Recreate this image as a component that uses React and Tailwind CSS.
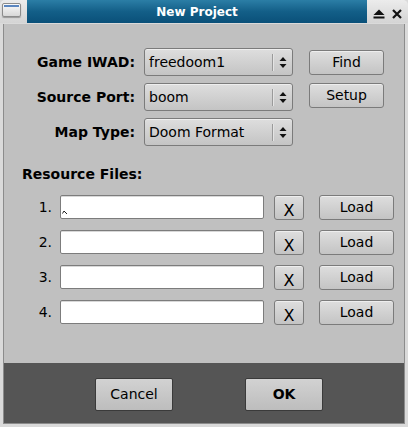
import React from 'react';

const btn =
  'border border-[#7b7b7b] rounded-[3px] bg-gradient-to-b from-[#dedede] to-[#c4c4c4] shadow-[inset_0_1px_0_#eeeeee] flex items-center justify-center';

function Arrows() {
  return (
    <svg width="8" height="13" viewBox="0 0 8 13">
      <path d="M4 1 L7.5 5 L0.5 5 Z" fill="#111" />
      <path d="M0.5 8 L7.5 8 L4 12 Z" fill="#111" />
    </svg>
  );
}

function Choice({ value }) {
  return (
    <div className={'w-[149px] h-[28px] flex ' + btn.replace('justify-center', '')}>
      <span className="flex-1 pl-[4px] leading-[26px]">{value}</span>
      <div className="h-[17px] w-[2px] border-l border-[#9a9a9a] bg-[#e4e4e4]" />
      <div className="w-[18px] flex items-center justify-center">
        <Arrows />
      </div>
    </div>
  );
}

function FileRow({ n, caret }) {
  return (
    <div className="flex items-start h-[24px]">
      <span className="w-[48px] text-right leading-[24px]">{n}.</span>
      <div className="ml-[8px] w-[204px] h-[24px] bg-white border border-[#7c7c7c] rounded-[2px] shadow-[inset_0_1px_0_#d8d8d8] relative">
        {caret && (
          <svg className="absolute left-[1px] top-[14px]" width="6" height="5" viewBox="0 0 6 5">
            <path d="M0.5 3.5 L2 1 L5 4" fill="none" stroke="#222" strokeWidth="1" />
          </svg>
        )}
      </div>
      <div className={'ml-[10px] w-[30px] h-[25px] text-[16px] pt-[6px] ' + btn}>X</div>
      <div className={'ml-[15px] w-[75px] h-[25px] ' + btn}>Load</div>
    </div>
  );
}

export default function App() {
  return (
    <div className="w-[408px] h-[427px] flex flex-col bg-[#dadada] font-['DejaVu_Sans',sans-serif] text-[14px] text-black">
      {/* barre de titre */}
      <div className="h-[23px] flex shrink-0">
        <div className="w-[27px] rounded-tl-[5px] bg-gradient-to-b from-[#ececec] to-[#d4d4d4] pl-[2px] pt-[3px]">
          <div className="w-[19px] h-[14px] rounded-[2px] border border-[#8c8c8c] bg-gradient-to-b from-[#fafafa] to-[#d8d8d8] shadow-[0_1px_1px_#999]">
            <div className="h-[2px] mt-[1px] mx-[1px] bg-[#5b86c0]" />
          </div>
        </div>
        <div className="flex-1 bg-gradient-to-b from-[#2b7ea6] via-[#135f88] to-[#0a5079] text-white font-bold text-[12px] flex items-center justify-center">
          New Project
        </div>
        <div className="w-[41px] rounded-tr-[5px] bg-gradient-to-b from-[#ececec] to-[#d4d4d4] flex items-start pt-[9px] pl-[6px] gap-[7px]">
          <svg width="12" height="10" viewBox="0 0 12 10">
            <path d="M6 0.5 L11.5 6 L0.5 6 Z" fill="#111" />
            <rect x="0.5" y="7.5" width="11" height="2" fill="#111" />
          </svg>
          <svg width="10" height="10" viewBox="0 0 10 10">
            <path d="M1 1 L9 9 M9 1 L1 9" stroke="#111" strokeWidth="2.2" />
          </svg>
        </div>
      </div>

      <div className="flex-1 flex flex-col px-[3px] pb-[3px] pt-[1px]">
        <div className="flex-1 flex flex-col border-x border-b border-[#8c8c8c]">
          <div className="flex-1 bg-[#c0c0c0] pt-[24px]">
            <div className="flex flex-col gap-[7px]">
              <div className="flex items-start h-[28px]">
                <span className="w-[131px] text-right font-bold leading-[28px]">Game IWAD:</span>
                <div className="ml-[9px]"><Choice value="freedoom1" /></div>
                <div className={'ml-[16px] mt-[2px] w-[75px] h-[25px] ' + btn}>Find</div>
              </div>
              <div className="flex items-start h-[28px]">
                <span className="w-[131px] text-right font-bold leading-[28px]">Source Port:</span>
                <div className="ml-[9px]"><Choice value="boom" /></div>
                <div className={'ml-[16px] w-[75px] h-[25px] ' + btn}>Setup</div>
              </div>
              <div className="flex items-start h-[28px]">
                <span className="w-[131px] text-right font-bold leading-[28px]">Map Type:</span>
                <div className="ml-[9px]"><Choice value="Doom Format" /></div>
              </div>
            </div>

            <div className="ml-[18px] mt-[20px] font-bold leading-[17px]">Resource Files:</div>

            <div className="mt-[12px] flex flex-col gap-[11px]">
              <FileRow n={1} caret />
              <FileRow n={2} />
              <FileRow n={3} />
              <FileRow n={4} />
            </div>
          </div>

          <div className="h-[60px] shrink-0 bg-[#555555] flex items-start pt-[15px] pl-[91px]">
            <div className="w-[78px] h-[33px] rounded-[2px] border border-[#3a3a3a] bg-gradient-to-b from-[#d2d2d2] to-[#bdbdbd] flex items-center justify-center">
              Cancel
            </div>
            <div className="ml-[72px] w-[78px] h-[33px] rounded-[2px] border border-[#3a3a3a] bg-gradient-to-b from-[#d2d2d2] to-[#bdbdbd] flex items-center justify-center font-bold">
              OK
            </div>
          </div>
        </div>
      </div>
    </div>
  );
}
